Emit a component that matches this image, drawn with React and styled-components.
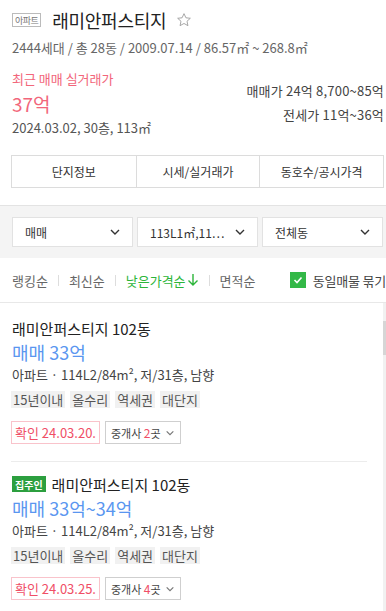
import React from "react";
import styled, { createGlobalStyle } from "styled-components";

const GlobalStyle = createGlobalStyle`
  html, body {
    margin: 0;
    padding: 0;
    background: #fff;
  }
  body {
    font-family: "Noto Sans CJK KR", "Noto Sans", sans-serif;
    color: #333;
    width: 386px;
    overflow: hidden;
  }
  * {
    box-sizing: border-box;
  }
`;

const Page = styled.div`
  width: 386px;
  height: 611px;
  display: flex;
  flex-direction: column;
  overflow: hidden;
`;

const Header = styled.div`
  padding: 8px 2px 0 12px;
`;

const TitleRow = styled.div`
  display: flex;
  align-items: center;
  height: 24px;
`;

const TypeBadge = styled.span`
  display: inline-flex;
  align-items: center;
  justify-content: center;
  height: 14px;
  padding: 0 2px;
  border: 1px solid #bbb;
  font-size: 9px;
  color: #777;
  letter-spacing: -0.5px;
  margin-right: 11px;
`;

const Title = styled.h1`
  margin: 0;
  font-size: 18px;
  font-weight: 400;
  color: #222;
  letter-spacing: -0.3px;
`;

const Star = styled.svg`
  margin-left: 10px;
  width: 16px;
  height: 16px;
`;

const Meta = styled.div`
  margin-top: 6px;
  font-size: 13px;
  line-height: 20px;
  color: #666;
`;

const PriceRow = styled.div`
  display: flex;
  justify-content: space-between;
  margin-top: 11px;
`;

const PriceLeft = styled.div`
  display: flex;
  flex-direction: column;
`;

const RecentLabel = styled.div`
  font-size: 13px;
  line-height: 20px;
  color: #f2667b;
`;

const RecentPrice = styled.div`
  font-size: 19px;
  line-height: 29px;
  color: #f2667b;
`;

const RecentInfo = styled.div`
  font-size: 13px;
  line-height: 20px;
  color: #555;
`;

const PriceRight = styled.div`
  display: flex;
  flex-direction: column;
  align-items: flex-end;
  padding-top: 12px;
  gap: 4px;
`;

const RangeLine = styled.div`
  font-size: 13px;
  line-height: 20px;
  color: #444;
  letter-spacing: 0.2px;
`;

const Tabs = styled.div`
  display: grid;
  grid-template-columns: repeat(3, 1fr);
  margin: 17px 2px 0 11px;
  border: 1px solid #dcdcdc;
  height: 33px;
`;

const Tab = styled.div`
  display: flex;
  align-items: center;
  justify-content: center;
  font-size: 12px;
  color: #333;
  & + & {
    border-left: 1px solid #dcdcdc;
  }
`;

const FilterBar = styled.div`
  margin-top: 17px;
  border-top: 1px solid #e3e3e3;
  background: #f4f4f4;
  padding: 11px 3px 11px 12px;
  display: grid;
  grid-template-columns: repeat(3, 1fr);
  gap: 4px;
`;

const Select = styled.div`
  height: 30px;
  background: #fff;
  border: 1px solid #e2e2e2;
  display: flex;
  align-items: center;
  justify-content: space-between;
  padding: 0 11px 0 12px;
  font-size: 12px;
  color: #333;
`;

const SortRow = styled.div`
  display: flex;
  align-items: center;
  height: 44px;
  padding-left: 12px;
  font-size: 13px;
`;

const SortItem = styled.span`
  color: ${(p) => (p.$active ? "#2cb53a" : "#666")};
  display: inline-flex;
  align-items: center;
  gap: 1px;
`;

const Divider = styled.span`
  width: 1px;
  height: 11px;
  background: #ddd;
  margin: 0 10px;
`;

const Grouping = styled.div`
  margin-left: auto;
  display: flex;
  align-items: center;
  gap: 7px;
  color: #444;
  white-space: nowrap;
  letter-spacing: -0.2px;
`;

const CheckBox = styled.span`
  width: 16px;
  height: 16px;
  background: #33b847;
  display: inline-flex;
  align-items: center;
  justify-content: center;
`;

const ListArea = styled.div`
  flex: 1;
  display: flex;
  border-top: 1px solid #e8e8e8;
  min-height: 0;
`;

const List = styled.div`
  flex: 1;
  padding-top: 3px;
`;

const ScrollTrack = styled.div`
  width: 3px;
  background: #f1f1f1;
  padding-top: 18px;
`;

const ScrollThumb = styled.div`
  height: 34px;
  background: #d6d6d6;
`;

const Card = styled.div`
  margin: 0 16px 0 11px;
  padding: 11px 0 17px 1px;
  border-bottom: 1px solid #ececec;
`;

const CardTitle = styled.div`
  display: flex;
  align-items: center;
  height: 22px;
  font-size: 15px;
  color: #222;
`;

const OwnerBadge = styled.span`
  display: inline-flex;
  align-items: center;
  justify-content: center;
  height: 16px;
  padding: 0 3px;
  background: #2c9f3f;
  color: #fff;
  font-size: 10px;
  font-weight: 700;
  margin-right: 6px;
`;

const CardPrice = styled.div`
  font-size: 18px;
  line-height: 26px;
  color: #5a96f0;
`;

const CardInfo = styled.div`
  font-size: 13px;
  line-height: 20px;
  color: #444;
`;

const Tags = styled.div`
  display: flex;
  gap: 5px;
  margin-top: 6px;
  margin-left: -1px;
`;

const Tag = styled.span`
  height: 17px;
  display: inline-flex;
  align-items: center;
  padding: 0 2px;
  background: #f1f1f1;
  font-size: 13px;
  color: #555;
`;

const Actions = styled.div`
  display: flex;
  gap: 5px;
  margin-top: 13px;
  margin-left: -1px;
`;

const Confirm = styled.span`
  height: 23px;
  display: inline-flex;
  align-items: center;
  padding: 0 3px;
  border: 1px solid #f9c3cb;
  color: #f04e66;
  font-size: 13px;
`;

const Broker = styled.span`
  height: 23px;
  display: inline-flex;
  align-items: center;
  gap: 4px;
  padding: 0 5px;
  border: 1px solid #cfcfcf;
  color: #444;
  font-size: 11px;
`;

const Count = styled.span`
  color: #f04e66;
  font-size: 12px;
`;

const Chevron = ({ size = 12, color = "#333" }) => (
  <svg width={size} height={size} viewBox="0 0 12 12">
    <path d="M2 4 L6 8 L10 4" fill="none" stroke={color} strokeWidth="1.4" />
  </svg>
);

const listings = [
  {
    owner: false,
    price: "매매 33억",
    date: "24.03.20.",
    brokers: 2,
  },
  {
    owner: true,
    price: "매매 33억~34억",
    date: "24.03.25.",
    brokers: 4,
  },
];

export default function App() {
  return (
    <Page>
      <GlobalStyle />
      <Header>
        <TitleRow>
          <TypeBadge>아파트</TypeBadge>
          <Title>래미안퍼스티지</Title>
          <Star viewBox="0 0 24 24">
            <path
              d="M12 2.5l2.9 6.2 6.6.7-5 4.5 1.4 6.6L12 17.2l-5.9 3.3 1.4-6.6-5-4.5 6.6-.7z"
              fill="none"
              stroke="#999"
              strokeWidth="1.3"
              strokeLinejoin="round"
            />
          </Star>
        </TitleRow>
        <Meta>2444세대 / 총 28동 / 2009.07.14 / 86.57㎡ ~ 268.8㎡</Meta>
        <PriceRow>
          <PriceLeft>
            <RecentLabel>최근 매매 실거래가</RecentLabel>
            <RecentPrice>37억</RecentPrice>
            <RecentInfo>2024.03.02, 30층, 113㎡</RecentInfo>
          </PriceLeft>
          <PriceRight>
            <RangeLine>매매가 24억 8,700~85억</RangeLine>
            <RangeLine>전세가 11억~36억</RangeLine>
          </PriceRight>
        </PriceRow>
      </Header>

      <Tabs>
        <Tab>단지정보</Tab>
        <Tab>시세/실거래가</Tab>
        <Tab>동호수/공시가격</Tab>
      </Tabs>

      <FilterBar>
        <Select>
          매매 <Chevron />
        </Select>
        <Select>
          113L1㎡,11… <Chevron />
        </Select>
        <Select>
          전체동 <Chevron />
        </Select>
      </FilterBar>

      <SortRow>
        <SortItem>랭킹순</SortItem>
        <Divider />
        <SortItem>최신순</SortItem>
        <Divider />
        <SortItem $active>
          낮은가격순
          <svg width="12" height="14" viewBox="0 0 12 14">
            <path d="M6 1 V12 M1.5 7.5 L6 12 L10.5 7.5" fill="none" stroke="#2cb53a" strokeWidth="1.4" />
          </svg>
        </SortItem>
        <Divider />
        <SortItem>면적순</SortItem>
        <Grouping>
          <CheckBox>
            <svg width="10" height="10" viewBox="0 0 10 10">
              <path d="M1.5 5 L4 7.5 L8.5 2.5" fill="none" stroke="#fff" strokeWidth="1.6" />
            </svg>
          </CheckBox>
          동일매물 묶기
        </Grouping>
      </SortRow>

      <ListArea>
        <List>
          {listings.map((item, i) => (
            <Card key={i}>
              <CardTitle>
                {item.owner && <OwnerBadge>집주인</OwnerBadge>}
                래미안퍼스티지 102동
              </CardTitle>
              <CardPrice>{item.price}</CardPrice>
              <CardInfo>아파트 · 114L2/84m², 저/31층, 남향</CardInfo>
              <Tags>
                <Tag>15년이내</Tag>
                <Tag>올수리</Tag>
                <Tag>역세권</Tag>
                <Tag>대단지</Tag>
              </Tags>
              <Actions>
                <Confirm>확인 {item.date}</Confirm>
                <Broker>
                  <span>
                    중개사 <Count>{item.brokers}</Count>곳
                  </span>
                  <Chevron size={10} color="#777" />
                </Broker>
              </Actions>
            </Card>
          ))}
        </List>
        <ScrollTrack>
          <ScrollThumb />
        </ScrollTrack>
      </ListArea>
    </Page>
  );
}
